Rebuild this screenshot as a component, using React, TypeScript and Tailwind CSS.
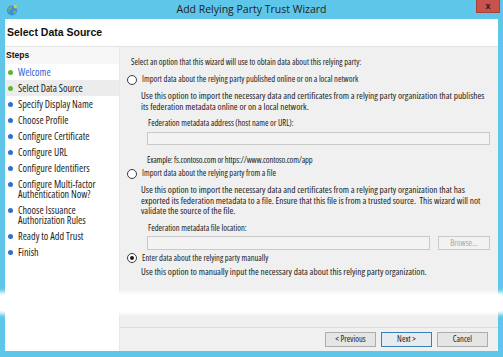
import React from "react";

const steps = [
  { label: ["Welcome"], state: "done" },
  { label: ["Select Data Source"], state: "current" },
  { label: ["Specify Display Name"], state: "todo" },
  { label: ["Choose Profile"], state: "todo" },
  { label: ["Configure Certificate"], state: "todo" },
  { label: ["Configure URL"], state: "todo" },
  { label: ["Configure Identifiers"], state: "todo" },
  { label: ["Configure Multi-factor", "Authentication Now?"], state: "todo" },
  { label: ["Choose Issuance", "Authorization Rules"], state: "todo" },
  { label: ["Ready to Add Trust"], state: "todo" },
  { label: ["Finish"], state: "todo" },
];

const AppIcon = () => (
  <svg width="12" height="12" viewBox="0 0 12 12">
    <circle cx="6" cy="6.5" r="5" fill="#3f8fd8" />
    <path d="M2.5 4.5c1-1.5 2.5-2 3.5-1.5l-.5 2-2 .5 .5 2-1.5.5z" fill="#6fc24a" />
    <path d="M7.5 7l2-.5.5 2-1.5 1.5-1.5-1z" fill="#6fc24a" />
    <circle cx="9.3" cy="2.6" r="1.8" fill="#f0c23a" />
  </svg>
);

const Radio = ({ checked = false }: { checked?: boolean }) => (
  <span className="w-[10px] h-[10px] rounded-full border border-[#3a3a3a] bg-white flex items-center justify-center shrink-0">
    {checked && <span className="w-[4px] h-[4px] rounded-full bg-[#1a1a1a]" />}
  </span>
);

const Button = ({ children, primary = false }: { children: React.ReactNode; primary?: boolean }) => (
  <div
    className={`w-[51px] h-[15px] flex items-center justify-center border text-[8.5px] text-[#1a1a1a] ${
      primary ? "border-[#3c7fb1] bg-[#e6ebf0]" : "border-[#acacac] bg-[#e5e5e5]"
    }`}
  >
    {children}
  </div>
);

export default function App() {
  return (
    <div className="relative w-[503px] h-[357px] bg-[#5ec6e8] flex flex-col overflow-hidden font-['Open_Sans',sans-serif] [font-stretch:condensed] text-[#1a1a1a]">
      {/* title bar */}
      <div className="h-[19px] grid grid-cols-[60px_1fr_60px] items-center shrink-0">
        <div className="pl-[6px] flex items-center">
          <AppIcon />
        </div>
        <div className="text-center text-[10.5px] [font-stretch:normal] text-[#222]">Add Relying Party Trust Wizard</div>
        <div className="flex justify-end self-start pr-[3px]">
          <div className="w-[24px] h-[13px] bg-[#c9524c] border-x border-b border-[#a8403b] flex items-center justify-center text-[9px] font-bold text-[#1c1c1c] font-['Liberation_Sans',sans-serif] leading-none">
            x
          </div>
        </div>
      </div>

      {/* window body */}
      <div className="flex-1 mx-[5px] mb-[6px] bg-white flex flex-col">
        <div className="h-[28px] shrink-0 border-b border-[#e2e2e2] flex items-center pl-[2px]">
          <span className="font-['Liberation_Sans',sans-serif] font-bold text-[10.5px] text-[#111]">Select Data Source</span>
        </div>

        <div className="flex-1 flex">
          {/* steps */}
          <div className="w-[115px] shrink-0 bg-white border-r border-[#e8e8e8] flex flex-col">
            <div className="h-[17px] bg-[#f7f7f7] flex items-center pl-[1px]">
              <span className="font-['Liberation_Sans',sans-serif] font-bold text-[8.5px] text-[#111]">Steps</span>
            </div>
            {steps.map((s) => (
              <div
                key={s.label[0]}
                className={`flex items-start gap-[5px] pl-[3px] py-[3px] text-[10.2px] leading-[10px] ${
                  s.state === "current" ? "bg-[#ececec]" : ""
                }`}
              >
                <span
                  className={`mt-[2.5px] w-[5px] h-[5px] rounded-full shrink-0 ${
                    s.state === "todo" ? "bg-[#2f6fd6]" : "bg-[#58b63a]"
                  }`}
                />
                <div className={s.state === "done" ? "text-[#2d63d4]" : "text-[#1e1e1e]"}>
                  {s.label.map((l) => (
                    <div key={l} className="whitespace-nowrap">{l}</div>
                  ))}
                </div>
              </div>
            ))}
          </div>

          {/* content */}
          <div className="flex-1 flex flex-col bg-[#f0f0f0]">
            <div className="flex-1 flex flex-col pl-[7px] pr-[8px] pt-[10px] text-[8.5px] leading-[10.5px] whitespace-nowrap">
              <div className="pl-[4px]">Select an option that this wizard will use to obtain data about this relying party:</div>

              <div className="mt-[6px] h-[12px] flex items-center gap-[5px]">
                <Radio />
                <span>Import data about the relying party published online or on a local network</span>
              </div>
              <div className="mt-[5.5px] ml-[14px] text-[9.3px]">
                Use this option to import the necessary data and certificates from a relying party organization that publishes
                <br />
                its federation metadata online or on a local network.
              </div>
              <div className="mt-[6px] ml-[21px]">Federation metadata address (host name or URL):</div>
              <div className="mt-[3px] ml-[20px] h-[13px] border border-[#c9c9c9] bg-[#f3f3f3]" />
              <div className="mt-[10.5px] ml-[20px] tracking-[-0.15px]">Example: fs.contoso.com or https://www.contoso.com/app</div>

              <div className="mt-[2px] h-[12px] flex items-center gap-[5px]">
                <Radio />
                <span>Import data about the relying party from a file</span>
              </div>
              <div className="mt-[5.5px] ml-[14px] text-[9.3px]">
                Use this option to import the necessary data and certificates from a relying party organization that has
                <br />
                exported its federation metadata to a file. Ensure that this file is from a trusted source.&nbsp; This wizard will not
                <br />
                validate the source of the file.
              </div>
              <div className="mt-[6.5px] ml-[21px]">Federation metadata file location:</div>
              <div className="mt-[2.5px] ml-[20px] flex gap-[8px]">
                <div className="flex-1 h-[14px] border border-[#c9c9c9] bg-[#f3f3f3]" />
                <div className="w-[52px] h-[14px] border border-[#cacaca] bg-[#f2f2f2] text-[#a8a8a8] flex items-center justify-center">
                  Browse...
                </div>
              </div>

              <div className="mt-[2px] h-[12px] flex items-center gap-[5px]">
                <Radio checked />
                <span>Enter data about the relying party manually</span>
              </div>
              <div className="mt-[3px] ml-[14px] text-[9.3px]">
                Use this option to manually input the necessary data about this relying party organization.
              </div>
            </div>

            {/* footer */}
            <div className="h-[24px] shrink-0 border-t border-[#dcdcdc] flex items-center justify-end gap-[5px] pr-[10px]">
              <Button>&lt; Previous</Button>
              <Button primary>Next &gt;</Button>
              <Button>Cancel</Button>
            </div>
          </div>
        </div>
      </div>

      {/* washed-out band across the capture */}
      <div className="absolute left-0 right-0 top-[295px] h-[16px] bg-white shadow-[0_0_4px_3px_#ffffff]" />
    </div>
  );
}
